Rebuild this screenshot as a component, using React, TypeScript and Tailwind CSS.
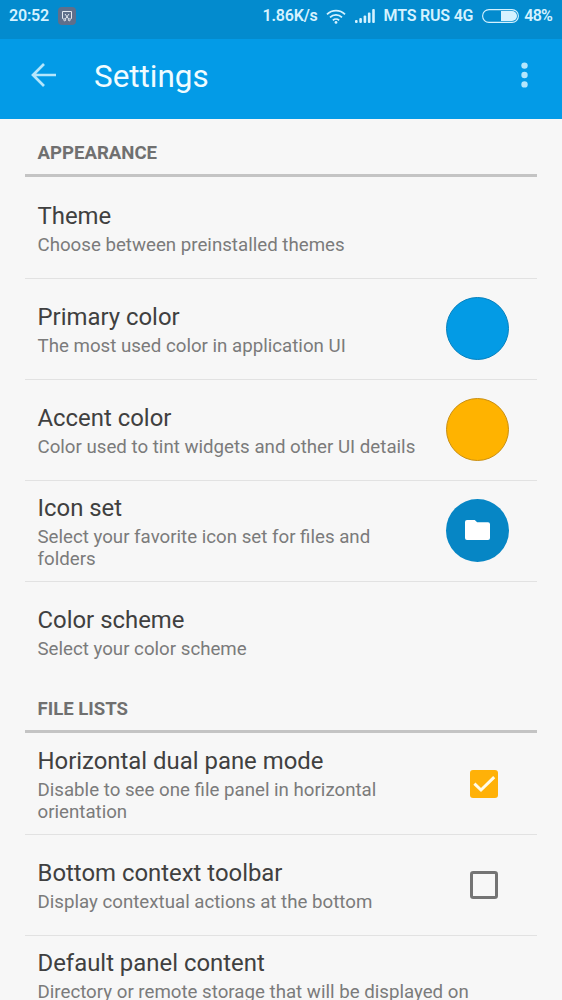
import type { ReactNode } from "react"
import { clsx } from "clsx"

interface SettingItem {
  title: string
  summary: string
  widget?: ReactNode
}

function Swatch({ className }: { className: string }) {
  return <div className={clsx("size-[63px] rounded-full border-[1.5px]", className)} />
}

function FolderBadge() {
  return (
    <div className="flex size-[63px] items-center justify-center rounded-full bg-[#0686c5]">
      <svg className="h-5 w-[25px]" viewBox="0 0 25 20" fill="#fff">
        <path d="M2 0h7.7l2.5 2.2h10.8A2 2 0 0 1 25 4.2v13.8a2 2 0 0 1-2 2h-21A2 2 0 0 1 0 18V2A2 2 0 0 1 2 0z" />
      </svg>
    </div>
  )
}

function Checkbox({ checked = false }: { checked?: boolean }) {
  return (
    <div className="mt-px ml-6">
      <svg className="size-7" viewBox="0 0 28 28" fill="none">
        {checked ? (
          <>
            <rect width="28" height="28" rx="3" fill="#ffb108" />
            <path d="M4.4 13.6 11 20 24.2 7.2" stroke="#fffbe8" strokeWidth="3" />
          </>
        ) : (
          <rect x="1.5" y="1.5" width="25" height="25" rx="1.8" stroke="#747474" strokeWidth="3" />
        )}
      </svg>
    </div>
  )
}

const appearance: SettingItem[] = [
  { title: "Theme", summary: "Choose between preinstalled themes" },
  {
    title: "Primary color",
    summary: "The most used color in application UI",
    widget: <Swatch className="border-[#0781bd] bg-[#039be5]" />,
  },
  {
    title: "Accent color",
    summary: "Color used to tint widgets and other UI details",
    widget: <Swatch className="border-[#c98f14] bg-[#ffb300]" />,
  },
  {
    title: "Icon set",
    summary: "Select your favorite icon set for files and folders",
    widget: <FolderBadge />,
  },
  { title: "Color scheme", summary: "Select your color scheme" },
]

const fileLists: SettingItem[] = [
  {
    title: "Horizontal dual pane mode",
    summary: "Disable to see one file panel in horizontal orientation",
    widget: <Checkbox checked />,
  },
  {
    title: "Bottom context toolbar",
    summary: "Display contextual actions at the bottom",
    widget: <Checkbox />,
  },
  {
    title: "Default panel content",
    summary: "Directory or remote storage that will be displayed on application start",
  },
]

function StatusBar() {
  return (
    <div className="flex h-[39px] items-center bg-[#038bce] pr-[10px] pb-[7px] pl-[9px] text-[16px] font-semibold tracking-[-0.2px] text-[#d5f2ff]">
      <span>20:52</span>
      <div className="ml-[9px] flex size-[18px] items-center justify-center rounded-sm bg-[#5f6f8b]">
        <svg className="size-3" viewBox="0 0 12 12" fill="none" stroke="#e3e9f1" strokeWidth="1">
          <path d="M2.5 8.5H1.5v-7h9v7h-1" />
          <path d="m4 4 3.7 5M8 4 4.3 9" />
          <circle cx="3.7" cy="9.8" r="1" />
          <circle cx="8.3" cy="9.8" r="1" />
        </svg>
      </div>
      <span className="ml-auto">1.86K/s</span>
      <svg className="ml-[8px] h-[15px] w-5" viewBox="0 0 20 15" fill="none" stroke="#d5f2ff" strokeWidth="1.8">
        <path d="M1 5.3a13 13 0 0 1 18 0M4 8.4a8.6 8.6 0 0 1 12 0M6.9 11.3a4.5 4.5 0 0 1 6.2 0" />
        <circle cx="10" cy="13.4" r="1.4" fill="#d5f2ff" stroke="none" />
      </svg>
      <svg className="ml-[9px] h-[14px] w-5" viewBox="0 0 20 14" fill="#d5f2ff">
        <rect x="0" y="11" width="2.6" height="3" rx="1" />
        <rect x="4.3" y="9" width="2.6" height="5" rx="1" />
        <rect x="8.6" y="6.5" width="2.6" height="7.5" rx="1" />
        <rect x="12.9" y="3.5" width="2.6" height="10.5" rx="1" />
        <rect x="17.2" y="0" width="2.6" height="14" rx="1" />
      </svg>
      <span className="ml-[9px]">MTS RUS 4G</span>
      <svg className="ml-[9px] h-[14px] w-[37px]" viewBox="0 0 37 14" fill="none">
        <rect x="0.6" y="0.6" width="35.8" height="12.8" rx="6.4" stroke="#d5f2ff" strokeWidth="1.1" />
        <path d="M19 2h11a5 5 0 0 1 0 10H19z" fill="#d5f2ff" />
      </svg>
      <span className="ml-[5px] tracking-[-0.8px]">48%</span>
    </div>
  )
}

function Toolbar() {
  return (
    <header className="flex h-20 items-center bg-[#039be7] pr-[33px] pb-2 pl-[31px]">
      <svg className="h-6 w-[25px]" viewBox="0 0 25 24" fill="none" stroke="#b5e6fc" strokeWidth="2.7">
        <path d="M25 12H2.5M13 1 2 12l11 11" />
      </svg>
      <h1 className="ml-[38px] pt-[3px] text-[31.4px] leading-none text-[#f0fcff]">Settings</h1>
      <svg className="ml-auto h-[26px] w-[9px]" viewBox="0 0 9 26" fill="#b5e6fc">
        <circle cx="4.5" cy="3.6" r="3.2" />
        <circle cx="4.5" cy="13" r="3.2" />
        <circle cx="4.5" cy="22.4" r="3.2" />
      </svg>
    </header>
  )
}

function Section({ name, items }: { name: string; items: SettingItem[] }) {
  return (
    <section className="mx-[25px]">
      <h2 className="flex h-[51px] items-center border-b-[3px] border-[#c4c4c4] pt-2 pl-[12.5px] text-[18.6px] font-bold text-[#707070]">
        {name}
      </h2>
      {items.map((item, i) => (
        <div
          key={item.title}
          className={clsx(
            "flex h-[101px] items-center pb-px pl-[12.5px]",
            i < items.length - 1 && "shadow-[0_1px_#e2e2e2]"
          )}
        >
          <div className="min-w-0 flex-1 pt-[3px]">
            <p className="mb-[3px] text-[23.9px] leading-[29px] text-[#404040]">{item.title}</p>
            <p className="text-[18.7px] leading-[22px] text-[#7b7b7b]">{item.summary}</p>
          </div>
          {item.widget && <div className="mr-7 ml-6 flex w-[63px]">{item.widget}</div>}
        </div>
      ))}
    </section>
  )
}

export default function App() {
  return (
    <div className="h-[1000px] w-[562px] overflow-hidden bg-[#f7f7f7] font-['Roboto',sans-serif]">
      <StatusBar />
      <Toolbar />
      <main className="pt-[7px]">
        <Section name="APPEARANCE" items={appearance} />
        <Section name="FILE LISTS" items={fileLists} />
      </main>
    </div>
  )
}
